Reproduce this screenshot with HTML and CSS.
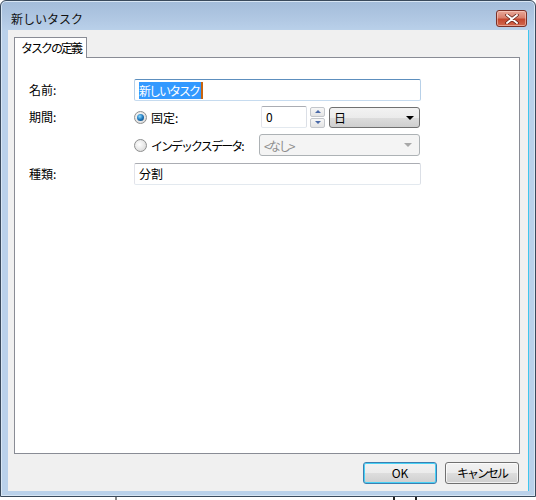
FILE: index.html
```html
<!DOCTYPE html>
<html lang="ja">
<head>
    <meta charset="UTF-8">
    <title>新しいタスク</title>
    <link rel="stylesheet" href="styles.css">
</head>
<body>

    <div class="window">
        <div class="titlebar">
            <span class="title">新しいタスク</span>
            <div class="close-btn">
                <svg width="14" height="10" viewBox="0 0 14 10">
                    <path d="M2 1 L12 9 M12 1 L2 9" stroke="#5a1a12" stroke-width="3.4" stroke-linecap="round"/>
                    <path d="M2 1 L12 9 M12 1 L2 9" stroke="#ffffff" stroke-width="2" stroke-linecap="round"/>
                </svg>
            </div>
        </div>

        <div class="client">
            <div class="tabs">
                <div class="tab narrow">タスクの定義</div>
            </div>

            <div class="panel">
                <div class="row row-name">
                    <div class="label">名前:</div>
                    <div class="textbox focused">
                        <span class="selected narrow">新しいタスク</span><span class="caret"></span>
                    </div>
                </div>

                <div class="row row-period">
                    <div class="label">期間:</div>
                    <div class="option">
                        <span class="radio checked"></span>
                        <span>固定:</span>
                    </div>
                    <div class="textbox spin-input">0</div>
                    <div class="spin">
                        <div class="spin-btn"><span class="tri up"></span></div>
                        <div class="spin-btn"><span class="tri down"></span></div>
                    </div>
                    <div class="combo">
                        <span>日</span>
                        <span class="arrow"></span>
                    </div>
                </div>

                <div class="row row-index">
                    <div class="label"></div>
                    <div class="option">
                        <span class="radio"></span>
                        <span class="narrow">インデックス データ:</span>
                    </div>
                    <div class="combo disabled">
                        <span class="narrow">&lt;なし&gt;</span>
                        <span class="arrow"></span>
                    </div>
                </div>

                <div class="row row-type">
                    <div class="label">種類:</div>
                    <div class="textbox">分割</div>
                </div>
            </div>

            <div class="actions">
                <div class="btn default">OK</div>
                <div class="btn narrow">キャンセル</div>
            </div>
        </div>
    </div>

    <div class="under">
        <span class="mark mark-a"></span>
        <span class="mark mark-b"></span>
        <span class="mark mark-c"></span>
    </div>

</body>
</html>
```

FILE: styles.css
```css
body {
    margin: 0;
    background-color: #ffffff;
    font-family: "Noto Sans CJK JP", "Noto Sans", sans-serif;
    font-size: 12px;
    color: #000;
    width: 536px;
    height: 500px;
    overflow: hidden;
}
.narrow {
    letter-spacing: -2px;
    white-space: nowrap;
}
.window {
    box-sizing: border-box;
    width: 536px;
    height: 497px;
    border: 1px solid #3a4a5c;
    border-radius: 6px 6px 0 0;
    background: linear-gradient(#a3bcda 0px, #b2c9e4 20px, #bad1ea 30px, #bad1ea 100%);
    padding: 0 7px 5px 7px;
    display: flex;
    flex-direction: column;
    box-shadow: inset 0 0 0 1px #d8e6f4;
}
.titlebar {
    height: 29px;
    display: flex;
    justify-content: space-between;
    align-items: flex-start;
    padding: 9px 1px 0 3px;
    box-sizing: border-box;
}
.title {
    line-height: 17px;
    color: #111;
}
.close-btn {
    width: 31px;
    height: 17px;
    box-sizing: border-box;
    border: 1px solid #7b3128;
    border-radius: 3px;
    background: linear-gradient(#e9a899 0%, #d9806d 45%, #c4472f 55%, #d2694f 100%);
    box-shadow: inset 0 0 0 1px rgba(255, 220, 210, 0.5);
    display: flex;
    align-items: center;
    justify-content: center;
}
.client {
    height: 461px;
    background-color: #f0f0f0;
    padding: 7px 8px 0 6px;
    box-sizing: border-box;
    box-shadow: 1px 0 0 #3ec6ee;
}
.tabs {
    display: flex;
    height: 20px;
}
.tab {
    width: 73px;
    height: 21px;
    box-sizing: border-box;
    background-color: #fff;
    border: 1px solid #898c95;
    border-bottom: none;
    padding-left: 6px;
    line-height: 19px;
    position: relative;
    z-index: 1;
}
.panel {
    height: 397px;
    box-sizing: border-box;
    background-color: #fff;
    border: 1px solid #898c95;
    padding: 21px 0 0 14px;
}
.row {
    display: flex;
    align-items: center;
    height: 22px;
}
.row-period {
    margin-top: 5px;
}
.row-index {
    margin-top: 6px;
}
.row-type {
    margin-top: 7px;
}
.label {
    width: 105px;
    line-height: 22px;
}
.textbox {
    box-sizing: border-box;
    width: 287px;
    height: 22px;
    border: 1px solid;
    border-color: #abadb3 #dbdfe6 #e3e9ef #e2e3ea;
    border-radius: 2px;
    background: #fff;
    padding-left: 4px;
    line-height: 20px;
    display: flex;
    align-items: center;
}
.textbox.focused {
    border-color: #5d8fbe #b7d0e8 #c6dbef #b7d0e8;
}
.selected {
    background-color: #3399ff;
    color: #fff;
    line-height: 17px;
    padding-right: 2px;
}
.caret {
    width: 2px;
    height: 17px;
    background-color: #c9650e;
}
.option {
    width: 125px;
    display: flex;
    align-items: center;
}
.radio {
    width: 11px;
    height: 11px;
    border: 1px solid #8e8f8f;
    border-radius: 50%;
    background: radial-gradient(circle at 40% 40%, #ffffff 0%, #e4e4e4 60%, #cfcfcf 100%);
    margin-right: 4px;
    display: flex;
    align-items: center;
    justify-content: center;
}
.radio.checked::after {
    content: "";
    width: 7px;
    height: 7px;
    border-radius: 50%;
    background: radial-gradient(circle at 40% 35%, #8fdcff 0%, #1f78bd 50%, #0d3a62 100%);
}
.spin-input {
    width: 46px;
    margin-left: 2px;
}
.spin {
    display: flex;
    flex-direction: column;
    justify-content: space-between;
    height: 21px;
    margin-left: 3px;
}
.spin-btn {
    width: 15px;
    height: 10px;
    box-sizing: border-box;
    border: 1px solid #c3c6cb;
    border-radius: 2px;
    background: linear-gradient(#f7f7f7, #e4e4e4);
    display: flex;
    align-items: center;
    justify-content: center;
}
.tri {
    width: 0;
    height: 0;
    border-left: 3px solid transparent;
    border-right: 3px solid transparent;
}
.tri.up {
    border-bottom: 3px solid #4b6aa8;
}
.tri.down {
    border-top: 3px solid #4b6aa8;
}
.combo {
    box-sizing: border-box;
    width: 91px;
    height: 21px;
    margin-left: 4px;
    margin-top: 1px;
    border: 1px solid #707070;
    border-radius: 3px;
    background: linear-gradient(#f2f2f2 0%, #ebebeb 50%, #dddddd 51%, #cfcfcf 100%);
    display: flex;
    align-items: center;
    justify-content: space-between;
    padding: 0 5px 0 4px;
}
.combo .arrow {
    width: 0;
    height: 0;
    border-left: 4px solid transparent;
    border-right: 4px solid transparent;
    border-top: 4px solid #000;
}
.combo.disabled {
    width: 161px;
    height: 22px;
    margin: 0;
    border-color: #adb2b5;
    background: #f4f4f4;
    color: #8d8d8d;
    padding-right: 7px;
}
.combo.disabled .arrow {
    border-top-color: #a8a8a8;
}
.actions {
    display: flex;
    justify-content: flex-end;
    gap: 8px;
    margin-top: 8px;
    margin-right: 1px;
}
.btn {
    width: 74px;
    height: 22px;
    box-sizing: border-box;
    border: 1px solid #707070;
    border-radius: 3px;
    background: linear-gradient(#f2f2f2 0%, #ebebeb 50%, #dddddd 51%, #cfcfcf 100%);
    text-align: center;
    line-height: 20px;
    box-shadow: inset 0 0 0 1px rgba(255, 255, 255, 0.7);
}
.btn.default {
    border-color: #3c7fb1;
    box-shadow: inset 0 0 0 1px #48d1f5;
}
.under {
    height: 3px;
    display: flex;
    align-items: flex-start;
}
.mark {
    width: 2px;
    height: 3px;
    background-color: #222;
}
.mark-a {
    margin-left: 115px;
    background-color: #888;
}
.mark-b {
    margin-left: 276px;
}
.mark-c {
    margin-left: 20px;
}
```
